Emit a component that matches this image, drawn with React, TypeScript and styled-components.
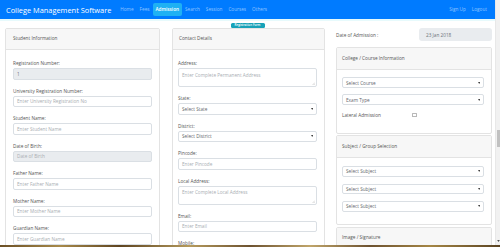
import React from "react";
import styled, { createGlobalStyle } from "styled-components";

const Global = createGlobalStyle`
  html, body { margin: 0; padding: 0; width: 500px; height: 247px; overflow: hidden; background: #fff; }
  body { font-family: "Open Sans", "Noto Sans", sans-serif; color: #212529; }
  * { box-sizing: border-box; }
`;

const Shell = styled.div`
  width: 500px;
  height: 247px;
  display: flex;
  flex-direction: column;
  overflow: hidden;
`;

const Viewport = styled.div`
  height: 245px;
  display: flex;
`;

const Page = styled.div`
  width: 495px;
  display: flex;
  flex-direction: column;
  overflow: hidden;
`;

const Navbar = styled.nav`
  height: 19px;
  flex-shrink: 0;
  background: #007bff;
  display: flex;
  align-items: center;
  padding: 0 5px 0 6px;
`;

const Brand = styled.div`
  color: #fff;
  font-size: 7.4px;
  white-space: nowrap;
  margin-right: 6px;
`;

const NavGroup = styled.div<{ $right?: boolean }>`
  display: flex;
  align-items: center;
  margin-left: ${(p) => (p.$right ? "auto" : "0")};
`;

const NavLink = styled.a<{ $active?: boolean }>`
  font-size: 4.7px;
  line-height: 13px;
  height: 13px;
  padding: 0 3px;
  border-radius: 2px;
  white-space: nowrap;
  color: ${(p) => (p.$active ? "#fff" : "rgba(255,255,255,0.55)")};
  background: ${(p) => (p.$active ? "#1fb1f3" : "transparent")};
  font-weight: ${(p) => (p.$active ? 600 : 400)};
`;

const Strip = styled.div`
  height: 2px;
  flex-shrink: 0;
  background: #e7fafc;
`;

const Content = styled.main`
  flex: 1;
  overflow: hidden;
  display: flex;
  flex-direction: column;
  align-items: center;
`;

const Badge = styled.span`
  margin-top: 2px;
  height: 5px;
  width: 34px;
  border-radius: 1.5px;
  background: #17a2b8;
  color: #fff;
  font-size: 3px;
  font-weight: 600;
  line-height: 5px;
  text-align: center;
  white-space: nowrap;
`;

const Columns = styled.div`
  align-self: stretch;
  display: grid;
  grid-template-columns: 155px 153px 155px;
  column-gap: 12px;
  padding: 0 4px 0 5px;
  align-items: start;
  & > :nth-child(3) { margin-left: -1px; }
`;

const Column = styled.div`
  display: flex;
  flex-direction: column;
`;

const Card = styled.section<{ $gap?: number }>`
  border: 1px solid #e3e3e3;
  border-radius: 2px;
  background: #fff;
  margin-top: ${(p) => p.$gap ?? 0}px;
  overflow: hidden;
`;

const CardHeader = styled.header<{ $h?: number; $pad?: number }>`
  height: ${(p) => p.$h ?? 21}px;
  background: #f7f7f7;
  border-bottom: 1px solid #e3e3e3;
  padding: 0 0 2px ${(p) => p.$pad ?? 7}px;
  display: flex;
  align-items: center;
  font-size: 4.7px;
  color: #555;
`;

const CardBody = styled.div<{ $pad: string }>`
  padding: ${(p) => p.$pad};
  display: flex;
  flex-direction: column;
`;

const Field = styled.div`
  display: flex;
  flex-direction: column;
  margin-bottom: 8px;
`;

const Label = styled.label`
  font-size: 4.7px;
  line-height: 6px;
  margin-bottom: 2px;
  color: #555;
  white-space: nowrap;
`;

const Input = styled.div<{ $disabled?: boolean; $filled?: boolean; $h?: number }>`
  position: relative;
  height: ${(p) => p.$h ?? 11.5}px;
  border: 1px solid #dadfe4;
  border-radius: 2px;
  background: ${(p) => (p.$disabled ? "#e9ecef" : "#fff")};
  padding: 0 3px;
  font-size: 4.7px;
  color: ${(p) => (p.$filled ? "#6a7178" : "#a9aeb3")};
  display: flex;
  align-items: center;
  white-space: nowrap;
`;

const TextArea = styled(Input)`
  height: 19px;
  align-items: flex-start;
  padding-top: 2.5px;
`;

const Select = styled(Input)`
  color: #5f666d;
  justify-content: space-between;
  padding-right: 3px;
`;

const Grip = styled.svg`
  position: absolute;
  right: 1px;
  bottom: 1px;
  width: 3px;
  height: 3px;
`;

const Arrow = styled.svg`
  width: 2.4px;
  height: 2px;
`;

const DateRow = styled.div`
  height: 13px;
  display: flex;
  align-items: center;
  justify-content: space-between;
  font-size: 4.7px;
  color: #555;
`;

const DateValue = styled.div`
  width: 73px;
  height: 13px;
  border-radius: 3px;
  background: #e9ecef;
  padding-left: 7px;
  display: flex;
  align-items: center;
  font-size: 4.7px;
  color: #6a7178;
`;

const Stack = styled.div<{ $gap: number }>`
  display: flex;
  flex-direction: column;
  gap: ${(p) => p.$gap}px;
`;

const CheckRow = styled.div`
  display: flex;
  align-items: center;
  height: 8px;
  margin-top: 6px;
  font-size: 4.7px;
  color: #555;
`;

const CheckText = styled.span`
  width: 70px;
`;

const CheckBox = styled.span`
  width: 4.5px;
  height: 4.5px;
  border: 1px solid #b8b8b8;
  border-radius: 0.5px;
  background: #fff;
`;

const Track = styled.div`
  width: 5px;
  background: #f1f1f1;
  border-left: 1px solid #e8e8e8;
  display: flex;
  flex-direction: column;
  align-items: center;
`;

const Thumb = styled.div<{ $top: number; $h: number }>`
  margin-top: ${(p) => p.$top}px;
  width: 3px;
  height: ${(p) => p.$h}px;
  background: #c1c1c1;
`;

const DownArrow = styled.svg`
  margin-top: auto;
  margin-bottom: 3px;
  width: 3px;
  height: 2px;
`;

const Footer = styled.footer`
  height: 2px;
  background: linear-gradient(90deg, #6b4f25, #a88a4a 12%, #5e4420 24%, #b59a5c 38%, #6d5230 50%, #c0a56a 62%, #6d5230 74%, #a58645 86%, #5a4322);
`;

const SelectArrow = () => (
  <Arrow viewBox="0 0 4 3">
    <path d="M0 0h4L2 3z" fill="#444" />
  </Arrow>
);

const ResizeGrip = () => (
  <Grip viewBox="0 0 6 6">
    <path d="M1 6L6 1M3.5 6L6 3.5" stroke="#aaa" strokeWidth="0.8" />
  </Grip>
);

const TextField = ({ label, text, disabled, filled }: { label: string; text?: string; disabled?: boolean; filled?: boolean }) => (
  <Field>
    <Label>{label}</Label>
    <Input $disabled={disabled} $filled={filled}>{text}</Input>
  </Field>
);

const AreaField = ({ label, text }: { label: string; text: string }) => (
  <Field>
    <Label>{label}</Label>
    <TextArea>
      {text}
      <ResizeGrip />
    </TextArea>
  </Field>
);

const SelectField = ({ label, text }: { label: string; text: string }) => (
  <Field>
    <Label>{label}</Label>
    <Select>
      {text}
      <SelectArrow />
    </Select>
  </Field>
);

const PlainSelect = ({ text, h }: { text: string; h?: number }) => (
  <Select $h={h}>
    {text}
    <SelectArrow />
  </Select>
);

export default function App() {
  return (
    <Shell>
      <Global />
      <Viewport>
        <Page>
          <Navbar>
            <Brand>College Management Software</Brand>
            <NavGroup>
              <NavLink>Home</NavLink>
              <NavLink>Fees</NavLink>
              <NavLink $active>Admission</NavLink>
              <NavLink>Search</NavLink>
              <NavLink>Session</NavLink>
              <NavLink>Courses</NavLink>
              <NavLink>Others</NavLink>
            </NavGroup>
            <NavGroup $right>
              <NavLink>Sign Up</NavLink>
              <NavLink>Logout</NavLink>
            </NavGroup>
          </Navbar>
          <Strip />
          <Content>
            <Badge>Registration Form</Badge>
            <Columns>
              <Column>
                <Card>
                  <CardHeader $pad={7}>Student Information</CardHeader>
                  <CardBody $pad="10px 7px 0 7px">
                    <TextField label="Registration Number:" text="1" disabled filled />
                    <TextField label="University Registration Number:" text="Enter University Registration No" />
                    <TextField label="Student Name:" text="Enter Student Name" />
                    <TextField label="Date of Birth:" text="Date of Birth" disabled />
                    <TextField label="Father Name:" text="Enter Father Name" />
                    <TextField label="Mother Name:" text="Enter Mother Name" />
                    <TextField label="Guardian Name:" text="Enter Guardian Name" />
                  </CardBody>
                </Card>
              </Column>
              <Column>
                <Card>
                  <CardHeader $pad={6}>Contact Details</CardHeader>
                  <CardBody $pad="10px 7px 0 5px">
                    <AreaField label="Address:" text="Enter Complete Permanent Address" />
                    <SelectField label="State:" text="Select State" />
                    <SelectField label="District:" text="Select District" />
                    <TextField label="Pincode:" text="Enter Pincode" />
                    <AreaField label="Local Address:" text="Enter Complete Local Address" />
                    <TextField label="Email:" text="Enter Email" />
                    <TextField label="Mobile:" />
                  </CardBody>
                </Card>
              </Column>
              <Column>
                <DateRow>
                  <span>Date of Admission :</span>
                  <DateValue>23 Jan 2018</DateValue>
                </DateRow>
                <Card $gap={6}>
                  <CardHeader $h={22} $pad={5}>College / Course Information</CardHeader>
                  <CardBody $pad="7px 7px 14px 5px">
                    <Stack $gap={6}>
                      <PlainSelect text="Select Course" h={11} />
                      <PlainSelect text="Exam Type" h={11} />
                    </Stack>
                    <CheckRow>
                      <CheckText>Lateral Admission</CheckText>
                      <CheckBox />
                    </CheckRow>
                  </CardBody>
                </Card>
                <Card $gap={1}>
                  <CardHeader $h={22} $pad={5}>Subject / Group Selection</CardHeader>
                  <CardBody $pad="8px 7px 12px 5px">
                    <Stack $gap={7}>
                      <PlainSelect text="Select Subject" h={10.5} />
                      <PlainSelect text="Select Subject" h={10.5} />
                      <PlainSelect text="Select Subject" h={10.5} />
                    </Stack>
                  </CardBody>
                </Card>
                <Card $gap={2}>
                  <CardHeader $h={22} $pad={5}>Image / Signature</CardHeader>
                  <CardBody $pad="8px 7px 12px 5px" />
                </Card>
              </Column>
            </Columns>
          </Content>
        </Page>
        <Track>
          <Thumb $top={130} $h={17} />
          <DownArrow viewBox="0 0 4 3">
            <path d="M0 0h4L2 3z" fill="#505050" />
          </DownArrow>
        </Track>
      </Viewport>
      <Footer />
    </Shell>
  );
}
